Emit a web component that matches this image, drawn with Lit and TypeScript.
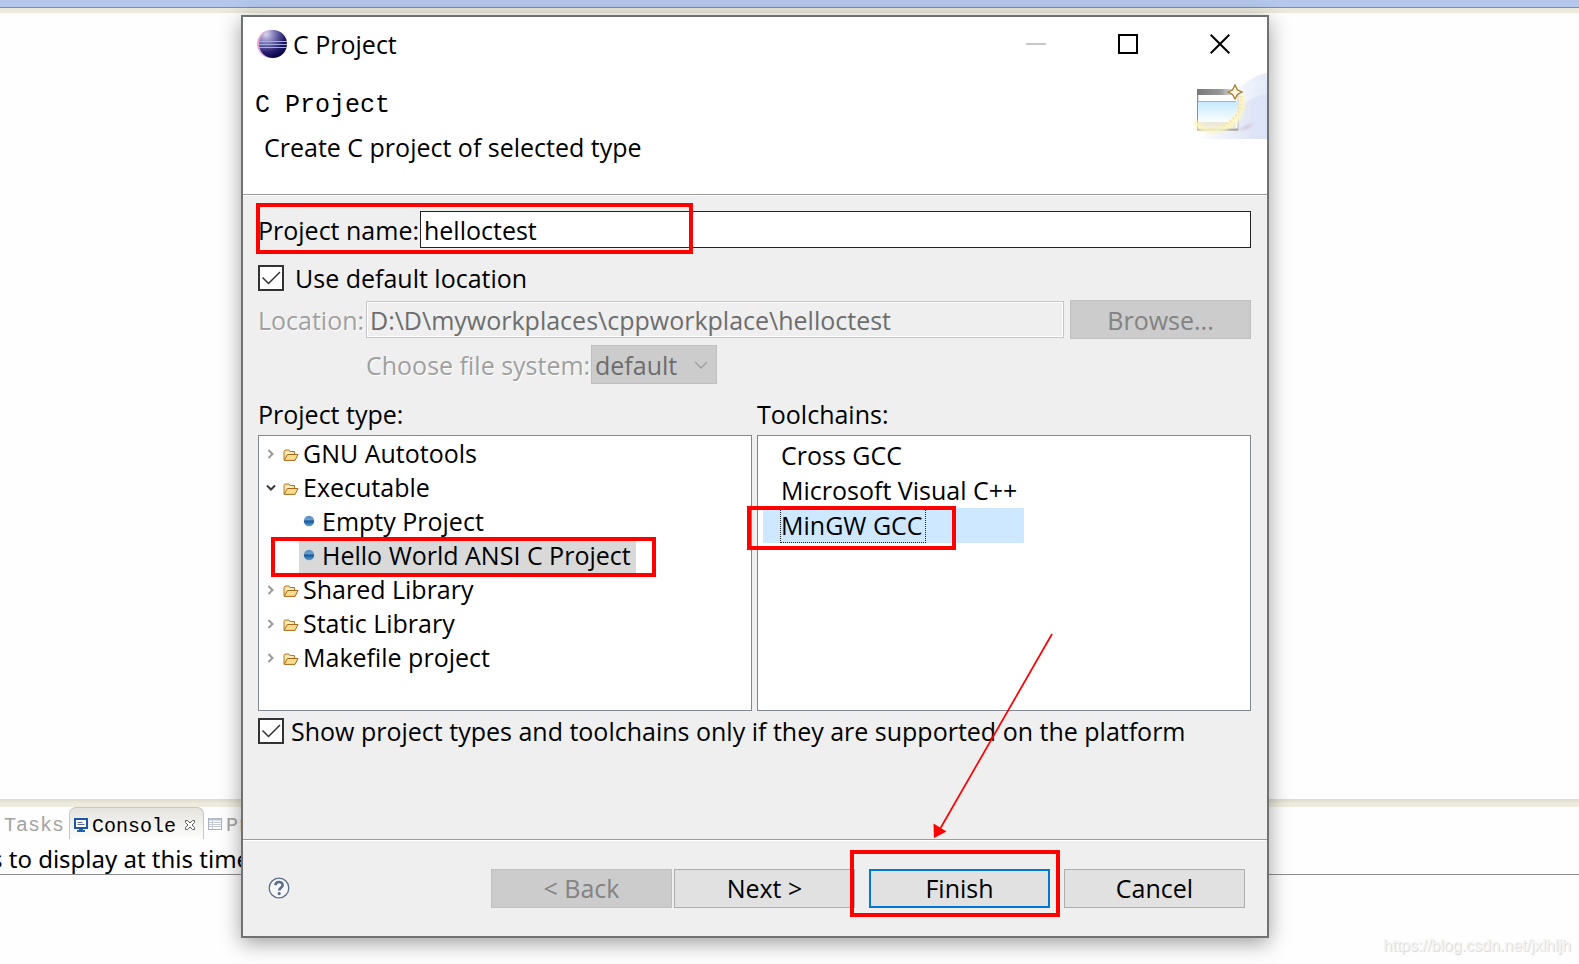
import { LitElement, html, css } from "lit";
import { customElement, property, state } from "lit/decorators.js";
import { classMap } from "lit/directives/class-map.js";

interface TreeNode {
  label: string;
  open?: boolean;
  children?: string[];
}

const PROJECT_TYPES: TreeNode[] = [
  { label: "GNU Autotools" },
  {
    label: "Executable",
    open: true,
    children: ["Empty Project", "Hello World ANSI C Project"],
  },
  { label: "Shared Library" },
  { label: "Static Library" },
  { label: "Makefile project" },
];

const TOOLCHAINS = ["Cross GCC", "Microsoft Visual C++", "MinGW GCC"];

const folderIcon = html`<svg class="icon" width="16" height="14" viewBox="0 0 16 14" aria-hidden="true">
  <path d="M1 12V3.5L2 2h4l1 1.5h4.5V6" fill="#fbe3a0" stroke="#b5782b" />
  <path d="M1.2 12.4L4.4 6.5H15L12 12.4Z" fill="#fbdc8c" stroke="#a8691c" />
  <path d="M2.5 5h7" stroke="#fff6d8" />
</svg>`;

const chevronClosed = html`<svg width="8" height="12" viewBox="0 0 8 12" aria-hidden="true">
  <path d="M1.5 2L5.5 6L1.5 10" fill="none" stroke="#9a9a9a" stroke-width="2" />
</svg>`;

const chevronOpen = html`<svg width="10" height="8" viewBox="0 0 10 8" aria-hidden="true">
  <path d="M1 1.5L5 5.5L9 1.5" fill="none" stroke="#3a3a3a" stroke-width="2" />
</svg>`;

const bulletIcon = html`<svg class="icon" width="12" height="12" viewBox="0 0 12 12" aria-hidden="true">
  <defs>
    <linearGradient id="bullet" x1="0" y1="0" x2="0" y2="1">
      <stop offset="0" stop-color="#5288bf" />
      <stop offset=".35" stop-color="#6d9fce" />
      <stop offset=".52" stop-color="#165a9c" />
      <stop offset="1" stop-color="#5f9dd0" />
    </linearGradient>
  </defs>
  <circle cx="6" cy="6" r="5.2" fill="url(#bullet)" />
</svg>`;

/** Workbench that sits behind the wizard. */
@customElement("ide-workbench")
export class IdeWorkbench extends LitElement {
  static styles = css`
    :host {
      display: flex;
      flex-direction: column;
      min-height: 100vh;
      background: #fefefe;
    }
    .topbar {
      height: 7px;
      background: #b5c7ec;
      border-bottom: 1px solid #7a8fb5;
    }
    .trim {
      height: 5px;
      background: #ece9dc;
    }
    .editor {
      flex: 1;
    }
    .sash {
      height: 8px;
      background: linear-gradient(#dcd9ce, #efecdf 60%);
    }
    .pane {
      height: 157px;
      box-sizing: border-box;
    }
    .tabs {
      display: flex;
      align-items: stretch;
      height: 32px;
      overflow: hidden;
      font: 20px/26px "Liberation Mono", monospace;
      color: #a3a3a3;
      white-space: nowrap;
    }
    .tab {
      display: flex;
      align-items: center;
      gap: 4px;
      padding: 6px 5px 0 4px;
    }
    .tab svg {
      margin-bottom: 4px;
    }
    .tab.active {
      box-sizing: border-box;
      color: #000;
      border: 1px solid #c6c6cc;
      border-bottom: 0;
      border-radius: 7px 7px 0 0;
      background: linear-gradient(#e4e3dd, #fefefe);
    }
    .tab .close {
      margin: 0 2px 4px 4px;
    }
    .message {
      height: 35px;
      border-bottom: 1px solid #8e8e8e;
      font: 24px/40px "Noto Sans", "Open Sans", sans-serif;
      color: #000;
      text-indent: -9px;
      white-space: nowrap;
      overflow: hidden;
    }
  `;

  render() {
    return html`
      <div class="topbar"></div>
      <div class="trim"></div>
      <div class="editor"></div>
      <div class="sash"></div>
      <section class="pane">
        <div class="tabs">
          <span class="tab">Tasks</span>
          <span class="tab active">
            <svg width="14" height="14" viewBox="0 0 14 14" aria-hidden="true">
              <rect x="1" y="1" width="12" height="9" fill="#fff" stroke="#1d57a8" stroke-width="2" />
              <path d="M3.500 4.500h5M3.500 6.500h7" stroke="#5b6f9b" />
              <path d="M5 11h4v1h2v2H3v-2h2z" fill="#2563ae" />
            </svg>
            Console
            <svg class="close" width="12" height="12" viewBox="0 0 12 12" aria-hidden="true">
              <path
                d="M1.500 1.500h2L6 4l2.500-2.500h2v2L8 6l2.500 2.500v2h-2L6 8l-2.500 2.500h-2v-2L4 6L1.500 3.500z"
                fill="#fff"
                stroke="#5c5c5c"
              />
            </svg>
          </span>
          <span class="tab">
            <svg width="14" height="12" viewBox="0 0 14 12" aria-hidden="true">
              <rect x=".5" y=".5" width="13" height="11" fill="#fff" stroke="#a9b2c4" />
              <path d="M1 1.500h12" stroke="#b9c1d2" stroke-width="2" />
              <path d="M1 4.500h12M1 6.500h12M1 8.500h12M4.500 3v8" stroke="#c3cad8" />
            </svg>
            Properties
          </span>
        </div>
        <div class="message">s to display at this time.</div>
      </section>
    `;
  }
}

/** Tick box with its caption. */
@customElement("tick-box")
export class TickBox extends LitElement {
  @property() label = "";
  @property({ type: Boolean }) tight = false;
  @state() private checked = true;

  static styles = css`
    :host {
      display: flex;
    }
    .row {
      display: flex;
      align-items: center;
      gap: 11px;
    }
    .row.tight {
      gap: 7px;
    }
    .box {
      position: relative;
      width: 26px;
      height: 26px;
    }
    input {
      appearance: none;
      display: block;
      box-sizing: border-box;
      width: 26px;
      height: 26px;
      margin: 0;
      border: 2px solid #333;
      background: #fff;
    }
    .tick {
      position: absolute;
      inset: 0;
      pointer-events: none;
    }
  `;

  private toggle(e: Event) {
    this.checked = (e.target as HTMLInputElement).checked;
  }

  render() {
    return html`<label class=${classMap({ row: true, tight: this.tight })}>
      <span class="box">
        <input type="checkbox" .checked=${this.checked} @change=${this.toggle} />
        ${this.checked
          ? html`<svg class="tick" width="26" height="26" viewBox="0 0 26 26" aria-hidden="true">
              <path d="M4.500 12.500L10.500 18.500L22 7" fill="none" stroke="#333" stroke-width="1.500" />
            </svg>`
          : null}
      </span>
      <span>${this.label}</span>
    </label>`;
  }
}

/** The "C Project" wizard window. */
@customElement("project-wizard")
export class ProjectWizard extends LitElement {
  @state() private projectType = "Hello World ANSI C Project";
  @state() private toolchain = "MinGW GCC";

  static styles = css`
    :host {
      display: flex;
      flex-direction: column;
      box-sizing: border-box;
      border: 2px solid #707173;
      background: #efefef;
      box-shadow: 0 5px 20px rgba(0, 0, 0, 0.38);
      font: 25px/34px "Open Sans", "Noto Sans", sans-serif;
      color: #000;
      white-space: nowrap;
    }
    button,
    input,
    select {
      font: inherit;
      color: inherit;
      border-radius: 0;
      box-sizing: border-box;
      margin: 0;
    }
    ul {
      list-style: none;
      margin: 0;
      padding: 0;
    }
    h1,
    h2,
    p {
      margin: 0;
      font-weight: 400;
      font-size: inherit;
    }

    .titlebar {
      display: flex;
      align-items: center;
      height: 54px;
      padding: 0 1px 0 14px;
      gap: 6px;
      background: #fff;
    }
    .titlebar h1 {
      flex: 1;
    }
    .controls {
      display: flex;
    }
    .controls button {
      display: grid;
      place-items: center;
      width: 92px;
      height: 54px;
      padding: 0;
      border: 0;
      background: none;
    }

    .header {
      display: flex;
      justify-content: space-between;
      align-items: flex-start;
      box-sizing: border-box;
      height: 125px;
      padding-top: 2px;
      background: #fff;
      border-bottom: 1px solid #fff;
      box-shadow: inset 0 -1px #9c9c9c;
    }
    .heading {
      padding: 16px 0 0 12px;
    }
    .heading h2 {
      font: 25px/34px "Liberation Mono", monospace;
    }
    .heading p {
      padding: 7px 0 0 9px;
    }

    .body {
      display: flex;
      flex-direction: column;
      flex: 1;
      padding: 15px 16px 0 15px;
    }
    .name-row {
      position: relative;
      display: grid;
      grid-template-columns: 162px 1fr;
      align-items: center;
    }
    .text {
      width: 100%;
      height: 37px;
      padding: 0 3px;
      border: 1px solid #222;
      background: #fff;
    }
    .text:disabled {
      border-color: #c6c6c6;
      background: #efefef;
      box-shadow: inset 0 0 0 1px #fff;
      color: #6d6d6d;
    }
    .default-row {
      padding: 13px 0 5px;
    }
    .location-row {
      display: grid;
      grid-template-columns: 108px 1fr 187px;
      align-items: center;
    }
    .location-row .push {
      margin-left: 6px;
    }
    .muted {
      color: #a0a0a0;
      text-shadow: 1px 1px #fff;
    }
    .fs-row {
      display: grid;
      grid-template-columns: 225px 126px;
      align-items: center;
      margin-top: 6px;
      padding-left: 108px;
    }
    .combo {
      position: relative;
      height: 39px;
    }
    .combo select {
      appearance: none;
      width: 100%;
      height: 39px;
      padding: 0 3px;
      border: 1px solid #bfbfbf;
      background: #ccc;
      color: #6d6d6d;
      opacity: 1;
    }
    .combo svg {
      position: absolute;
      right: 9px;
      top: 16px;
      pointer-events: none;
    }

    .lists {
      display: grid;
      grid-template-columns: 1fr 1fr;
      column-gap: 5px;
      padding-top: 13px;
    }
    .list {
      box-sizing: border-box;
      height: 276px;
      margin-top: 4px;
      border: 1px solid #828790;
      background: #fff;
    }
    .tree {
      padding: 1px 0 0 4px;
    }
    .node {
      display: flex;
      align-items: center;
      height: 34px;
    }
    .node span {
      margin-bottom: 2px;
    }
    .twisty {
      display: grid;
      place-items: center;
      width: 16px;
      height: 34px;
      padding: 0;
      border: 0;
      background: none;
    }
    .node .icon {
      margin: 2px 4px 0 4px;
    }
    .leaf {
      position: relative;
      display: flex;
      margin-left: 36px;
      height: 34px;
      width: max-content;
    }
    .leaf .face {
      display: flex;
      align-items: center;
      gap: 7px;
      padding: 0 5px 2px 4px;
    }
    .leaf .face .icon {
      margin-top: -1px;
    }
    .leaf.selected .face {
      background: #d9d9d9;
    }
    .chains {
      padding: 2px 0 0 5px;
    }
    .chain {
      position: relative;
      height: 35px;
      width: 261px;
      box-sizing: border-box;
      padding-left: 17px;
    }
    .chain span {
      display: inline-block;
      box-sizing: border-box;
      height: 34px;
      line-height: 30px;
      padding-right: 2px;
      border: 1px dotted transparent;
    }
    .chain.selected {
      background: #cde8ff;
    }
    .chain.selected span {
      border-color: #222;
    }
    .filter-row {
      padding: 3px 0 91px;
    }

    .footer {
      display: flex;
      align-items: center;
      justify-content: space-between;
      height: 96px;
      padding: 0 22px 0 25px;
      border-top: 1px solid #9c9c9c;
      box-shadow: inset 0 1px #fff;
    }
    .help {
      display: grid;
      place-items: center;
      width: 22px;
      height: 22px;
      padding: 0;
      border: 0;
      background: none;
    }
    .actions {
      display: flex;
      gap: 14px;
    }
    .pair {
      display: flex;
      gap: 2px;
    }
    .finish {
      position: relative;
    }
    .push {
      width: 181px;
      height: 39px;
      padding: 0;
      border: 1px solid #adadad;
      background: #e1e1e1;
      line-height: 34px;
    }
    .push:disabled {
      border-color: #bfbfbf;
      background: #ccc;
      color: #838383;
    }
    .push.primary {
      border: 2px solid #0078d7;
    }

    /* Red call-outs drawn over the controls they point at. */
    .mark {
      position: absolute;
      z-index: 1;
      box-sizing: border-box;
      border: 4px solid #f00;
      pointer-events: none;
    }
    .mark-name {
      inset: -8px auto -6px -2px;
      width: 437px;
    }
    .mark-type {
      inset: -2px -20px -4px -28px;
    }
    .mark-chain {
      inset: -2px 68px -7px -16px;
    }
    .mark-finish {
      inset: -19px -10px -9px -19px;
    }
    .arrow {
      position: absolute;
      z-index: 2;
      right: 214px;
      bottom: 97px;
      pointer-events: none;
    }
  `;

  private renderLeaf(label: string) {
    const selected = label === this.projectType;
    return html`<li
      class=${classMap({ leaf: true, selected })}
      role="treeitem"
      aria-selected=${selected}
      @click=${() => (this.projectType = label)}
    >
      <span class="face">${bulletIcon}<span>${label}</span></span>
      ${selected ? html`<span class="mark mark-type"></span>` : null}
    </li>`;
  }

  private renderNode(node: TreeNode) {
    return html`<li role="treeitem" aria-expanded=${!!node.open}>
      <div class="node">
        <button class="twisty" aria-label="Toggle ${node.label}">
          ${node.open ? chevronOpen : chevronClosed}
        </button>
        ${folderIcon}<span>${node.label}</span>
      </div>
      ${node.open && node.children
        ? html`<ul role="group">${node.children.map((c) => this.renderLeaf(c))}</ul>`
        : null}
    </li>`;
  }

  private renderLogo() {
    return html`<svg width="30" height="28" viewBox="0 0 30 28" aria-hidden="true">
      <defs>
        <radialGradient id="globe" cx=".25" cy=".15" r=".95">
          <stop offset="0" stop-color="#d9d6ee" />
          <stop offset=".35" stop-color="#7a74b4" />
          <stop offset=".7" stop-color="#231c6c" />
          <stop offset="1" stop-color="#05003f" />
        </radialGradient>
      </defs>
      <circle cx="14" cy="14" r="14" fill="#e6a9d8" />
      <circle cx="16" cy="14" r="14" fill="url(#globe)" />
      <path d="M2 11.500h28M2 14.500h28M2 17.500h28" stroke="#a3aee0" />
    </svg>`;
  }

  private renderBanner() {
    return html`<svg width="74" height="66" viewBox="0 0 74 66" aria-hidden="true">
      <defs>
        <linearGradient id="sweep" x1="0" x2="1">
          <stop offset="0" stop-color="#fff" />
          <stop offset=".8" stop-color="#dfe5f7" />
          <stop offset="1" stop-color="#dde4f7" />
        </linearGradient>
        <linearGradient id="haze" x1="0" x2="1">
          <stop offset="0" stop-color="#f6f9fd" />
          <stop offset="1" stop-color="#e3eaf8" />
        </linearGradient>
        <linearGradient id="bar" x1="0" x2="1">
          <stop offset="0" stop-color="#777" />
          <stop offset=".6" stop-color="#999" />
          <stop offset="1" stop-color="#eee" />
        </linearGradient>
        <linearGradient id="view" x1="0" y1="0" x2="0" y2="1">
          <stop offset="0" stop-color="#c4e9fc" />
          <stop offset="1" stop-color="#fbfeff" />
        </linearGradient>
        <filter id="soft" x="-20%" y="-20%" width="140%" height="140%">
          <feGaussianBlur stdDeviation="1.500" />
        </filter>
      </defs>
      <path d="M40 22C52 9 62 2 74 0V30H46Z" fill="url(#haze)" />
      <path d="M0 66C28 62 40 26 74 21V66Z" fill="url(#sweep)" />
      <path d="M44 57L62 49L54 56Z" fill="#b9a9bd" opacity=".6" filter="url(#soft)" />
      <rect x="5" y="18" width="40" height="39" fill="#fff" stroke="#b4b4b4" />
      <rect x="4" y="16" width="39" height="6" fill="url(#bar)" />
      <rect x="5" y="28" width="40" height="21" fill="url(#view)" />
      <path d="M5 28.500h38" stroke="#a5b5b9" />
      <path d="M4.500 22v35" stroke="#8f8f8f" />
      <rect x="5" y="49" width="38" height="6" fill="#ece7da" />
      <path d="M4 56.500h41" stroke="#a9a298" stroke-width="2" />
      <path d="M1 48C8 60 28 60 39 50C48 43 51 34 48 22" fill="none" stroke="#fdf7c4" stroke-width="6" opacity=".85" filter="url(#soft)" />
      <path d="M30 53C42 47 49 37 48 23" fill="none" stroke="#f8e6ac" stroke-width="3" stroke-dasharray="2 2" />
      <path d="M42 12L44.500 17L49 19L44.500 21.500L42 26L39.500 21.500L35 19L39.500 17Z" fill="#fff8e2" stroke="#a8782a" stroke-width="1.300" />
    </svg>`;
  }

  render() {
    return html`
      <header class="titlebar">
        ${this.renderLogo()}
        <h1>C Project</h1>
        <div class="controls">
          <button aria-label="Minimize" disabled>
            <svg width="20" height="20" viewBox="0 0 20 20"><path d="M0 10h20" stroke="#c8c8c8" stroke-width="2" /></svg>
          </button>
          <button aria-label="Maximize">
            <svg width="20" height="20" viewBox="0 0 20 20"><rect x="1" y="1" width="18" height="18" fill="none" stroke="#000" stroke-width="2" /></svg>
          </button>
          <button aria-label="Close">
            <svg width="20" height="20" viewBox="0 0 20 20"><path d="M.7.7L19.300 19.300M19.300.7L.7 19.300" stroke="#000" stroke-width="2" /></svg>
          </button>
        </div>
      </header>

      <div class="header">
        <div class="heading">
          <h2>C Project</h2>
          <p>Create C project of selected type</p>
        </div>
        ${this.renderBanner()}
      </div>

      <div class="body">
        <div class="name-row">
          <label for="name">Project name:</label>
          <input id="name" class="text" type="text" value="helloctest" />
          <span class="mark mark-name"></span>
        </div>
        <tick-box class="default-row" label="Use default location"></tick-box>
        <div class="location-row">
          <label class="muted" for="location">Location:</label>
          <input id="location" class="text" type="text" value="D:\\D\\myworkplaces\\cppworkplace\\helloctest" disabled />
          <button class="push" disabled>Browse...</button>
        </div>
        <div class="fs-row">
          <label class="muted" for="fs">Choose file system:</label>
          <span class="combo">
            <select id="fs" disabled><option>default</option></select>
            <svg width="14" height="8" viewBox="0 0 14 8" aria-hidden="true">
              <path d="M1 1L7 7L13 1" fill="none" stroke="#9f9f9f" stroke-width="1.300" />
            </svg>
          </span>
        </div>

        <div class="lists">
          <section>
            <div id="types-label">Project type:</div>
            <ul class="list tree" role="tree" aria-labelledby="types-label">
              ${PROJECT_TYPES.map((n) => this.renderNode(n))}
            </ul>
          </section>
          <section>
            <div id="chains-label">Toolchains:</div>
            <ul class="list chains" role="listbox" aria-labelledby="chains-label">
              ${TOOLCHAINS.map((name) => {
                const selected = name === this.toolchain;
                return html`<li
                  class=${classMap({ chain: true, selected })}
                  role="option"
                  aria-selected=${selected}
                  @click=${() => (this.toolchain = name)}
                >
                  <span>${name}</span>
                  ${selected ? html`<i class="mark mark-chain"></i>` : null}
                </li>`;
              })}
            </ul>
          </section>
        </div>
        <tick-box
          class="filter-row"
          tight
          label="Show project types and toolchains only if they are supported on the platform"
        ></tick-box>
      </div>

      <footer class="footer">
        <button class="help" aria-label="Help">
          <svg width="22" height="22" viewBox="0 0 22 22" aria-hidden="true">
            <circle cx="11" cy="11" r="9.800" fill="#f7f8fa" stroke="#5b6b8c" stroke-width="1.300" />
            <path d="M7.500 8.300C7.500 4 14.600 4 14.600 8.200C14.600 10.800 11.200 10.700 11.200 13.600" fill="none" stroke="#5b6b8f" stroke-width="2.600" />
            <circle cx="11.200" cy="16.600" r="1.600" fill="#5b6b8f" />
          </svg>
        </button>
        <div class="actions">
          <div class="pair">
            <button class="push" disabled>&lt; Back</button>
            <button class="push">Next &gt;</button>
          </div>
          <div class="finish">
            <button class="push primary">Finish</button>
            <span class="mark mark-finish"></span>
          </div>
          <button class="push">Cancel</button>
        </div>
      </footer>

      <svg class="arrow" width="121" height="206" viewBox="0 0 121 206" aria-hidden="true">
        <path d="M120 1L8 196" stroke="#f00" stroke-width="1.700" />
        <path d="M1.500 190.500L14.500 198.500L2 205Z" fill="#f00" />
      </svg>
    `;
  }
}

@customElement("app-root")
export class AppRoot extends LitElement {
  static styles = css`
    :host {
      display: block;
      position: relative;
      min-height: 100vh;
      overflow: hidden;
    }
    .dialog {
      position: absolute;
      top: 15px;
      left: 241px;
      right: 310px;
    }
    .watermark {
      position: absolute;
      right: 8px;
      bottom: 8px;
      font: 16px/20px "Liberation Sans", sans-serif;
      color: #f4f4f4;
      text-shadow: 1px 1px 1px #d4d4d4;
    }
  `;

  render() {
    return html`
      <ide-workbench></ide-workbench>
      <project-wizard class="dialog"></project-wizard>
      <span class="watermark">https://blog.csdn.net/jxlhljh</span>
    `;
  }
}
